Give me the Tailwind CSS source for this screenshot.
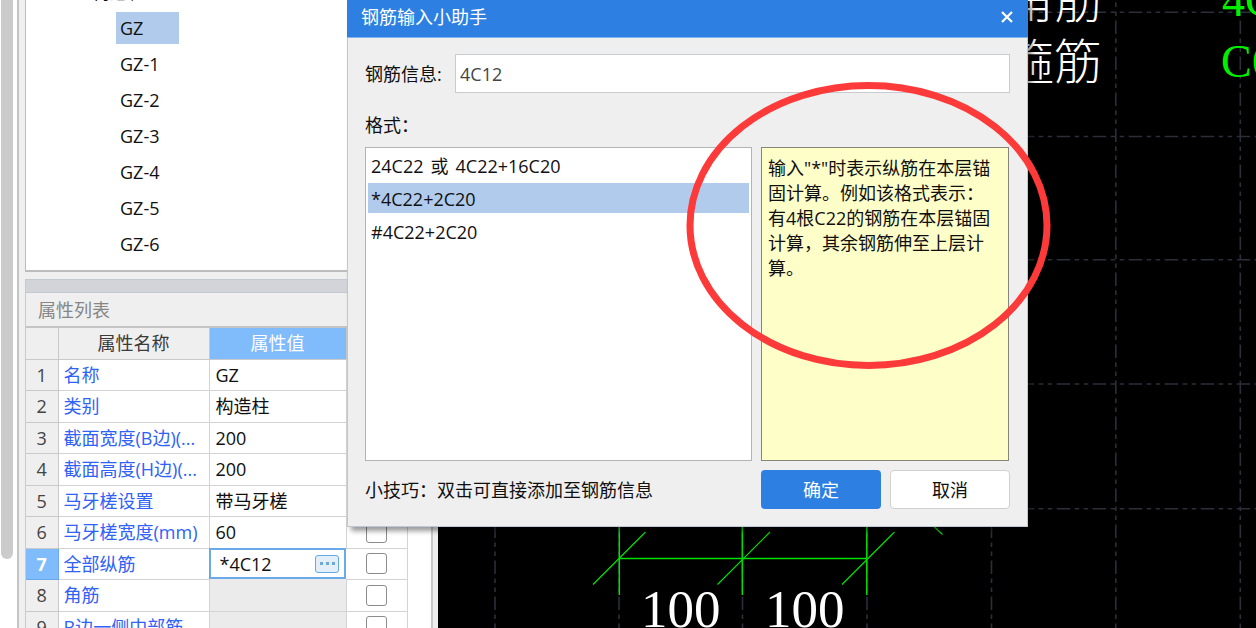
<!DOCTYPE html>
<html lang="zh-CN">
<head>
<meta charset="utf-8">
<title>钢筋输入小助手</title>
<script src="https://cdn.jsdelivr.net/npm/@tailwindcss/browser@4"></script>
</head>
<body class="relative flex h-screen overflow-hidden bg-white font-['Open_Sans','Noto_Sans_CJK_SC',sans-serif] text-[18px] leading-[26px] text-[#101010]">

  <!-- Left dock: component tree and property list -->
  <aside class="flex w-[438px] shrink-0 overflow-hidden bg-white">
    <div class="w-[17px] shrink-0 pl-px pr-1">
      <div class="h-[559px] rounded-b-md bg-[#cbcbcb]"></div>
    </div>
    <div class="flex min-w-0 flex-1 flex-col border-l-2 border-[#c4c4c4] bg-[#efefef] pl-[6px]">
      <ul class="flex h-[272px] shrink-0 flex-col justify-end overflow-hidden border-b-2 border-l border-[#bdbdbd] bg-white pb-2 pl-[90px]">
        <li class="flex h-9 shrink-0 items-center"><span class="-ml-6">构造柱</span></li>
        <li class="flex h-9 shrink-0 items-center"><span class="w-[63px] bg-[#b1cbec] py-[3px] pl-1">GZ</span></li>
        <li class="flex h-9 shrink-0 items-center pl-1">GZ-1</li>
        <li class="flex h-9 shrink-0 items-center pl-1">GZ-2</li>
        <li class="flex h-9 shrink-0 items-center pl-1">GZ-3</li>
        <li class="flex h-9 shrink-0 items-center pl-1">GZ-4</li>
        <li class="flex h-9 shrink-0 items-center pl-1">GZ-5</li>
        <li class="flex h-9 shrink-0 items-center pl-1">GZ-6</li>
      </ul>
      <section class="mt-[7px] flex flex-1 flex-col border-l border-[#c9cbd0]">
        <div class="h-[14px] shrink-0 border-y border-[#c3c9d0] bg-[#d2d4d9]"></div>
        <h2 class="flex h-[33px] shrink-0 items-center pl-3 text-[#868686]">属性列表</h2>
        <div class="h-0 flex-1 overflow-hidden bg-white">
          <div class="flex h-full">
            <table class="w-[381px] table-fixed self-start border-t-2 border-[#c4c4c4]">
              <colgroup><col class="w-[32px]"><col class="w-[151px]"><col class="w-[137px]"><col class="w-[61px]"></colgroup>
              <thead>
                <tr class="h-8 bg-[#efefef] text-[#3a3a3a] [&>th]:border-r [&>th]:border-b [&>th]:border-[#c9c9c9] [&>th]:font-normal">
                  <th></th><th>属性名称</th><th class="bg-[#80bbfb] text-white">属性值</th><th>附加</th>
                </tr>
              </thead>
              <tbody class="[&_td]:overflow-hidden [&_td]:border-r [&_td]:border-b [&_td]:border-[#d3d3d3] [&_td]:whitespace-nowrap [&_td]:leading-[26px] [&_th]:border-r [&_th]:border-b [&_th]:border-[#c9c9c9] [&_th]:bg-[#efefef] [&_th]:font-normal [&_th]:leading-[26px] [&_th]:text-[#444] [&_tr]:h-[31px] [&_tr:nth-child(even)]:h-8 [&_input]:block">
                <tr><th>1</th><td class="pl-[5px] text-[#2f62f6]">名称</td><td class="pl-[6px]">GZ</td><td></td></tr>
                <tr><th>2</th><td class="pl-[5px] text-[#2f62f6]">类别</td><td class="pl-[6px]">构造柱</td><td></td></tr>
                <tr><th>3</th><td class="pl-[5px] text-[#2f62f6]">截面宽度(B边)(...</td><td class="pl-[6px]">200</td><td></td></tr>
                <tr><th>4</th><td class="pl-[5px] text-[#2f62f6]">截面高度(H边)(...</td><td class="pl-[6px]">200</td><td></td></tr>
                <tr><th>5</th><td class="pl-[5px] text-[#2f62f6]">马牙槎设置</td><td class="pl-[6px]">带马牙槎</td><td></td></tr>
                <tr><th>6</th><td class="pl-[5px] text-[#2f62f6]">马牙槎宽度(mm)</td><td class="pl-[6px]">60</td><td><input type="checkbox" aria-label="马牙槎宽度" class="mx-auto size-[21px] appearance-none rounded-[3px] border border-[#8c8c8c] bg-white"></td></tr>
                <tr><th class="!border-[#6aa9ea] !bg-[#80bbfb] !font-bold !text-white">7</th><td class="pl-[5px] text-[#2f62f6]">全部纵筋</td>
                  <td class="!border-0 outline-2 -outline-offset-2 outline-[#6aa9ea]">
                    <div class="flex items-center justify-between pr-[7px] pl-[10px]">
                      <input type="text" aria-label="全部纵筋" value="*4C12" class="h-[26px] w-20 bg-transparent outline-none">
                      <button type="button" aria-label="更多" class="flex h-[18px] w-6 items-center justify-center gap-[3px] rounded-[3px] border border-[#62a9e6] bg-[#e4eef8]"><i class="size-[3px] bg-[#6aa9e0]"></i><i class="size-[3px] bg-[#6aa9e0]"></i><i class="size-[3px] bg-[#6aa9e0]"></i></button>
                    </div>
                  </td><td><input type="checkbox" aria-label="全部纵筋附加" class="mx-auto size-[21px] appearance-none rounded-[3px] border border-[#8c8c8c] bg-white"></td></tr>
                <tr><th>8</th><td class="pl-[5px] text-[#2f62f6]">角筋</td><td class="bg-[#ebebeb]"></td><td><input type="checkbox" aria-label="角筋附加" class="mx-auto size-[21px] appearance-none rounded-[3px] border border-[#8c8c8c] bg-white"></td></tr>
                <tr><th>9</th><td class="pl-[5px] text-[#2f62f6]">B边一侧中部筋</td><td class="bg-[#ebebeb]"></td><td><input type="checkbox" aria-label="B边一侧中部筋附加" class="mx-auto size-[21px] appearance-none rounded-[3px] border border-[#8c8c8c] bg-white"></td></tr>
              </tbody>
            </table>
            <div class="ml-auto w-[7px] border-l-2 border-[#c9c9c9] bg-[#efefef]"></div>
          </div>
        </div>
      </section>
    </div>
  </aside>

  <!-- Drawing canvas -->
  <main class="min-w-0 flex-1 overflow-hidden bg-black">
    <svg class="block size-full" aria-label="构造柱截面图">
      <g transform="translate(-438 0)">
        <g stroke="#2a2f3a" stroke-width="1.6" stroke-dasharray="13.5 4.5 4.5 4.5 4.5 4.5" fill="none">
          <path d="M495 -15.5V640M619 -15.5V640M742.5 -15.5V640M867 -15.5V640M991.5 -15.5V640M1115.8 -15.5V640M1240.3 -15.5V640"/>
          <path d="M408.7 12.3H1500M408.7 136.5H1500M408.7 259.7H1500M408.7 384H1500M408.7 508.7H1500"/>
        </g>
        <g stroke="#00e000" stroke-width="1.5" fill="none">
          <path d="M619.3 500V595M742.3 500V595M866.8 500V595M619 558.4H867"/>
          <path stroke-width="1.2" d="M593 584.5L645.5 532M717.5 584.5L770 532M842 584.5L894.5 532M928 521L942.5 534.5"/>
        </g>
        <g fill="#fff" class="font-['Liberation_Serif','Noto_Sans_CJK_SC',serif]">
          <text x="641" y="627" font-size="53">100</text>
          <text x="765" y="627" font-size="53">100</text>
          <g class="font-['Noto_Sans_CJK_SC',sans-serif] font-light" font-size="48">
            <text x="1006" y="18">角筋</text>
            <text x="1006" y="79">箍筋</text>
          </g>
          <g fill="#00f000" font-size="46">
            <text x="1222" y="16">4C12</text>
            <text x="1221" y="77">C6@200</text>
          </g>
        </g>
      </g>
    </svg>
  </main>

  <!-- Rebar input dialog -->
  <form role="dialog" aria-labelledby="dlg-title" class="absolute top-0 left-[347px] flex w-[681px] flex-col bg-[#efefef] shadow-[4px_4px_5px_rgba(0,0,0,0.4)]">
    <header class="flex h-[38px] items-center justify-between border-b border-[#7db4f2] bg-[#2d80e2] pr-[15px] pb-[3px] pl-[14px] text-white">
      <h1 id="dlg-title">钢筋输入小助手</h1>
      <button type="button" aria-label="关闭"><svg width="12" height="12" viewBox="0 0 12 12"><path d="M1 1L11 11M11 1L1 11" stroke="#fff" stroke-width="2.2"/></svg></button>
    </header>
    <div class="flex flex-col border-x border-b border-[#bdc7d6] px-[17px] pt-4 pb-[17px]">
      <div class="flex items-center justify-between">
        <label for="info">钢筋信息:</label>
        <input id="info" type="text" value="4C12" class="h-[39px] w-[555px] border border-[#c8ccd2] bg-white px-1 text-[#444] outline-none">
      </div>
      <div id="fmt" class="mt-[19px] h-[26px]">格式：</div>
      <div class="mt-[9px] flex gap-[9px] pr-px">
        <ul role="listbox" aria-labelledby="fmt" class="flex h-[314px] flex-1 flex-col gap-[3px] border border-[#b4b4b4] bg-white p-[2px]">
          <li role="option" class="flex h-[30px] items-center gap-[7px] pt-[2px] pl-[3px]"><span>24C22</span><span>或</span><span>4C22+16C20</span></li>
          <li role="option" aria-selected="true" class="flex h-[30px] items-center bg-[#b1cbec] pt-[2px] pl-[3px]">*4C22+2C20</li>
          <li role="option" class="flex h-[30px] items-center pt-[2px] pl-[3px]">#4C22+2C20</li>
        </ul>
        <p class="w-[248px] border border-[#85857e] bg-[#fefec9] py-2 pr-[5px] pl-[6px] leading-[25px]">输入"*"时表示纵筋在本层锚固计算。例如该格式表示：<br>有4根C22的钢筋在本层锚固计算，其余钢筋伸至上层计算。</p>
      </div>
      <div class="mt-[9px] flex items-center gap-[9px]">
        <p class="flex-1">小技巧：双击可直接添加至钢筋信息</p>
        <button type="submit" class="h-[39px] w-[120px] rounded-[4px] bg-[#2d80e2] text-white">确定</button>
        <button type="button" class="h-[39px] w-[120px] rounded-[4px] border border-[#d0d0d0] bg-white">取消</button>
      </div>
    </div>
  </form>

  <!-- Callout ring -->
  <svg class="pointer-events-none absolute top-[80px] left-[684px]" width="370" height="292" aria-hidden="true">
    <ellipse cx="184.5" cy="145.5" rx="178.5" ry="140" fill="none" stroke="#fc3a39" stroke-width="7"/>
  </svg>
</body>
</html>
